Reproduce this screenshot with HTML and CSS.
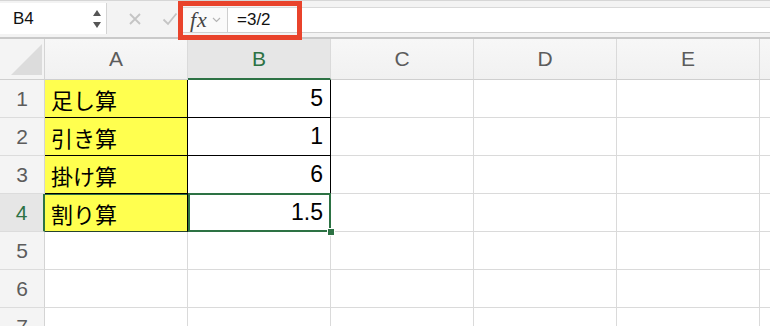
FILE: index.html
```html
<!DOCTYPE html>
<html lang="ja">
<head>
<meta charset="utf-8">
<title>Excel</title>
<link rel="stylesheet" href="styles.css">
</head>
<body>
<div class="app">
  <div class="toolbar">
    <div class="namebox">
      <span class="name">B4</span>
      <span class="spinner">
        <svg width="10" height="22" viewBox="0 0 10 22"><path d="M5 2 L9 8 L1 8 Z" fill="#555"/><path d="M1 14 L9 14 L5 20 Z" fill="#555"/></svg>
      </span>
    </div>
    <div class="actions">
      <svg class="act" width="14" height="14" viewBox="0 0 14 14"><path d="M2 2 L12 12 M12 2 L2 12" stroke="#c4c4c4" stroke-width="1.8" fill="none"/></svg>
      <svg class="act" width="16" height="14" viewBox="0 0 16 14"><path d="M1.5 7.5 L6 12 L14.5 1.5" stroke="#c4c4c4" stroke-width="1.8" fill="none"/></svg>
    </div>
    <div class="formula">
      <div class="fx"><span class="fx-text">fx</span><svg width="9" height="6" viewBox="0 0 9 6"><path d="M1 1 L4.5 4.5 L8 1" stroke="#b5b5b5" stroke-width="1.2" fill="none"/></svg></div>
      <div class="input">=3/2</div>
      <div class="highlight"></div>
    </div>
  </div>
  <div class="sheet">
    <div class="corner"><svg width="33" height="33" viewBox="0 0 33 33"><path d="M32 1 L32 32 L1 32 Z" fill="#dcdcdc"/></svg></div>
    <div class="ch">A</div>
    <div class="ch sel">B</div>
    <div class="ch">C</div>
    <div class="ch">D</div>
    <div class="ch">E</div>
    <div class="ch edge"></div>

    <div class="rh">1</div>
    <div class="c tbl yel">足し算</div>
    <div class="c tbl num">5</div>
    <div class="c"></div><div class="c"></div><div class="c"></div><div class="c edge"></div>

    <div class="rh">2</div>
    <div class="c tbl yel">引き算</div>
    <div class="c tbl num">1</div>
    <div class="c"></div><div class="c"></div><div class="c"></div><div class="c edge"></div>

    <div class="rh">3</div>
    <div class="c tbl yel">掛け算</div>
    <div class="c tbl num">6</div>
    <div class="c"></div><div class="c"></div><div class="c"></div><div class="c edge"></div>

    <div class="rh rsel">4</div>
    <div class="c tbl yel a4">割り算</div>
    <div class="c tbl num active">1.5<span class="handle"></span></div>
    <div class="c"></div><div class="c"></div><div class="c"></div><div class="c edge"></div>

    <div class="rh">5</div>
    <div class="c"></div><div class="c"></div><div class="c"></div><div class="c"></div><div class="c"></div><div class="c edge"></div>

    <div class="rh">6</div>
    <div class="c"></div><div class="c"></div><div class="c"></div><div class="c"></div><div class="c"></div><div class="c edge"></div>

    <div class="rh">7</div>
    <div class="c"></div><div class="c"></div><div class="c"></div><div class="c"></div><div class="c"></div><div class="c edge"></div>
  </div>
</div>
</body>
</html>
```

FILE: styles.css
```css
* { box-sizing: border-box; }
html, body {
  margin: 0;
  padding: 0;
  background: #ffffff;
}
body {
  width: 770px;
  height: 326px;
  overflow: hidden;
  font-family: "Liberation Sans", "Noto Sans CJK JP", sans-serif;
}
.app {
  width: 770px;
}
.toolbar {
  height: 39px;
  display: flex;
  align-items: stretch;
  background: #f3f3f3;
  border-top: 1px solid #d6d6d6;
  border-bottom: 2px solid #c9c9c9;
}
.namebox {
  width: 107px;
  margin: 2px 0 3px 0;
  background: #ffffff;
  border-right: 1px solid #d4d4d4;
  display: flex;
  align-items: center;
  justify-content: space-between;
  padding: 0 4px 0 13px;
}
.name {
  font-size: 17px;
  color: #111;
}
.spinner {
  display: flex;
  align-items: center;
}
.actions {
  width: 75px;
  display: flex;
  align-items: center;
  gap: 20px;
  padding-left: 21px;
}
.formula {
  position: relative;
  flex: 1;
  display: flex;
  margin: 6px 0 4px 0;
  background: #ffffff;
  border-top: 1px solid #d9d9d9;
  border-bottom: 1px solid #d0d0d0;
}
.fx {
  width: 46px;
  display: flex;
  align-items: center;
  gap: 4px;
  padding-left: 8px;
  background: #fafafa;
  border-right: 1px solid #cfcfcf;
}
.fx-text {
  font-family: "Liberation Serif", serif;
  font-style: italic;
  font-size: 22px;
  color: #444;
  letter-spacing: 1px;
}
.input {
  padding-left: 9px;
  font-size: 17px;
  color: #111;
  display: flex;
  align-items: center;
}
.highlight {
  position: absolute;
  left: -4px;
  top: -7px;
  width: 124px;
  height: 39px;
  border: 5px solid #e9432b;
  pointer-events: none;
}
.sheet {
  display: grid;
  grid-template-columns: 45px repeat(5, 143px) 10px;
  grid-template-rows: 41px repeat(7, 38px);
}
.corner {
  background: #f4f4f4;
  border-right: 1px solid #d4d4d4;
  border-bottom: 1px solid #cfcfcf;
  display: flex;
  align-items: flex-end;
  justify-content: flex-end;
  padding: 0 1px 3px 0;
}
.ch {
  background: linear-gradient(#f7f7f7, #f1f1f1);
  border-right: 1px solid #dadada;
  border-bottom: 1px solid #cfcfcf;
  display: flex;
  align-items: center;
  justify-content: center;
  font-size: 21px;
  color: #5c5c5c;
}
.ch.sel {
  background: #e6e6e6;
  color: #2d7244;
  border-bottom: 2px solid #2d7244;
}
.rh {
  background: #f4f4f4;
  border-right: 1px solid #d4d4d4;
  border-bottom: 1px solid #dcdcdc;
  display: flex;
  align-items: center;
  justify-content: center;
  font-size: 21px;
  color: #5c5c5c;
}
.rh.rsel {
  background: #e6e6e6;
  color: #2d7244;
  border-right: 2px solid #2d7244;
}
.c {
  position: relative;
  border-right: 1px solid #dadada;
  border-bottom: 1px solid #dadada;
  display: flex;
  align-items: center;
  font-size: 22px;
  color: #000;
  font-family: "Noto Sans CJK JP", "Liberation Sans", sans-serif;
}
.edge {
  border-right: none;
}
.tbl {
  border-right-color: #000;
  border-bottom-color: #000;
}
.yel {
  background: #ffff4f;
  padding-left: 6px;
}
.num {
  justify-content: flex-end;
  padding-right: 7px;
  font-family: "Liberation Sans", sans-serif;
  font-size: 23px;
}
.a4 {
  border-bottom-color: #24432f;
  box-shadow: inset 0 1px 0 #2d7244;
}
.active {
  border: none;
  box-shadow: inset 0 0 0 2px #2d7244;
  margin-top: -1px;
  padding-right: 8px;
  z-index: 2;
}
.handle {
  position: absolute;
  right: -4px;
  bottom: -4px;
  width: 8px;
  height: 8px;
  background: #2d7244;
  border: 1px solid #ffffff;
}
```
